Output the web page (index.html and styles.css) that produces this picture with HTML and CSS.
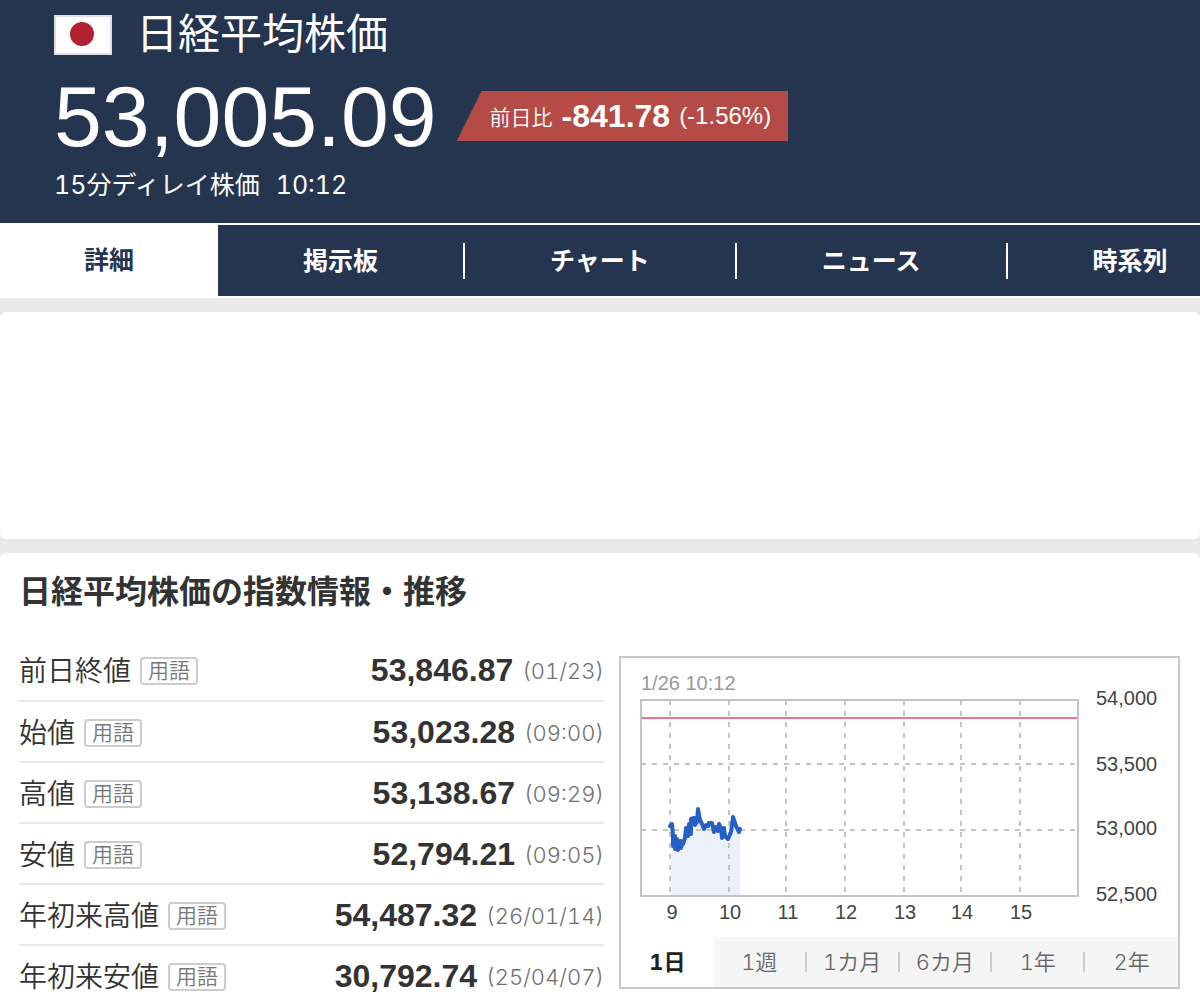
FILE: index.html
```html
<!DOCTYPE html>
<html lang="ja">
<head>
    <meta charset="UTF-8">
    <meta name="viewport" content="width=device-width, initial-scale=1.0">
    <title>日経平均株価</title>
    <link rel="stylesheet" href="styles.css">
</head>
<body>
    <header class="header">
        <div class="title">
            <svg class="flag" viewBox="0 0 58 40" aria-hidden="true">
                <rect x="1" y="1" width="56" height="38" fill="#fff" stroke="#dcdfea" stroke-width="2"/>
                <circle cx="28" cy="19" r="12" fill="#b3202f"/>
            </svg>
            <h1>日経平均株価</h1>
        </div>
        <div class="price">
            <span class="price-value">53,005.09</span>
            <p class="change">
                <span class="change-label">前日比</span>
                <b class="change-value">-841.78</b>
                <span class="change-rate">(-1.56%)</span>
            </p>
        </div>
        <p class="delay"><span>15分ディレイ株価</span><time>10:12</time></p>
    </header>
    <nav class="tabs">
        <a class="tab active" href="#">詳細</a>
        <a class="tab" href="#">掲示板</a>
        <a class="tab" href="#">チャート</a>
        <a class="tab" href="#">ニュース</a>
        <a class="tab" href="#">時系列</a>
    </nav>
    <main>
        <div class="card ad"></div>
        <section class="card info">
            <h2>日経平均株価の指数情報・推移</h2>
            <div class="columns">
                <table class="rows">
                    <tr>
                        <th scope="row">前日終値<a class="term" href="#">用語</a></th>
                        <td><b>53,846.87</b><span class="date">(01/23)</span></td>
                    </tr>
                    <tr>
                        <th scope="row">始値<a class="term" href="#">用語</a></th>
                        <td><b>53,023.28</b><span class="date">(09:00)</span></td>
                    </tr>
                    <tr>
                        <th scope="row">高値<a class="term" href="#">用語</a></th>
                        <td><b>53,138.67</b><span class="date">(09:29)</span></td>
                    </tr>
                    <tr>
                        <th scope="row">安値<a class="term" href="#">用語</a></th>
                        <td><b>52,794.21</b><span class="date">(09:05)</span></td>
                    </tr>
                    <tr>
                        <th scope="row">年初来高値<a class="term" href="#">用語</a></th>
                        <td><b>54,487.32</b><span class="date">(26/01/14)</span></td>
                    </tr>
                    <tr>
                        <th scope="row">年初来安値<a class="term" href="#">用語</a></th>
                        <td><b>30,792.74</b><span class="date">(25/04/07)</span></td>
                    </tr>
                </table>
                <div class="chart">
                    <svg class="plot" viewBox="0 0 557 279">
                        <text class="plot-date" x="20" y="32">1/26 10:12</text>
                        <!-- area under the price line -->
                        <path fill="#ebf0f9" d="M50 238V168L52 190L62 188L66 180L70 164L77 156L82 170L90 167L96 174L106 180L113 166L119 172V238Z"/>
                        <!-- grid -->
                        <path class="grid" d="M49 42V238M108 42V238M165 42V238M224 42V238M283 42V238M340 42V238M399 42V238"/>
                        <path class="grid" d="M20 106H457M20 172H457"/>
                        <rect class="frame" x="20" y="42" width="437" height="196"/>
                        <!-- previous close -->
                        <path d="M21 60H456" stroke="#e8788a" stroke-width="2"/>
                        <path class="line" d="M49 168L51 166L52 178L52 188L54 178L54 191L56 181L57 192L59 183L60 190L62 183L62 186L64 180L65 170L67 178L68 166L70 176L70 161L73 160L74 167L76 164L77 151L79 162L81 166L83 171L85 167L87 168L88 165L91 165L93 174L95 169L97 173L98 166L100 170L101 180L103 170L104 178L107 181L110 174L112 159L115 168L118 174L119 171"/>
                        <g class="labels">
                            <text x="475" y="47">54,000</text>
                            <text x="475" y="113">53,500</text>
                            <text x="475" y="177">53,000</text>
                            <text x="475" y="243">52,500</text>
                        </g>
                        <g class="labels hours">
                            <text x="51" y="261">9</text>
                            <text x="109" y="261">10</text>
                            <text x="167" y="261">11</text>
                            <text x="225" y="261">12</text>
                            <text x="284" y="261">13</text>
                            <text x="341" y="261">14</text>
                            <text x="400" y="261">15</text>
                        </g>
                    </svg>
                    <div class="periods">
                        <button class="active" type="button">1日</button>
                        <button type="button">1週</button>
                        <button type="button">1カ月</button>
                        <button type="button">6カ月</button>
                        <button type="button">1年</button>
                        <button type="button">2年</button>
                    </div>
                </div>
            </div>
        </section>
    </main>
</body>
</html>
```
FILE: styles.css
```css
* {
    box-sizing: border-box;
}
body {
    margin: 0;
    font-family: "Liberation Sans", "Noto Sans CJK JP", sans-serif;
    background: #e9e9e9;
    color: #333;
    overflow-x: hidden;
}
h1, h2, p {
    margin: 0;
}
a {
    color: inherit;
    text-decoration: none;
}
.header {
    padding: 14px 54px 29px;
    background: #25344f;
    color: #fff;
}
.title {
    display: flex;
    align-items: center;
    gap: 24px;
    height: 42px;
}
.flag {
    width: 58px;
    height: 40px;
}
h1 {
    font-size: 42px;
    font-weight: 400;
    line-height: 42px;
}
.price {
    display: flex;
    align-items: center;
    gap: 20px;
    height: 120px;
}
.price-value {
    font-size: 86px;
    line-height: 120px;
}
.change {
    display: flex;
    align-items: center;
    gap: 9px;
    height: 50px;
    padding: 0 17px 0 33px;
    background: #b54b46;
    clip-path: polygon(25px 0, 100% 0, 100% 100%, 0 100%);
    white-space: nowrap;
}
.change-label {
    font-size: 21px;
    font-weight: 350;
}
.change-value {
    font-size: 32px;
}
.change-rate {
    font-size: 24px;
}
.delay {
    display: flex;
    gap: 16px;
    font-family: Inter, "Noto Sans CJK JP", sans-serif;
    font-size: 25px;
    font-weight: 400;
    font-variant-numeric: tabular-nums;
    line-height: 18px;
}
.tabs {
    display: flex;
    height: 75px;
    border-top: 2px solid #fff;
    border-bottom: 2px solid #fff;
    background: #25344f;
    color: #fff;
    overflow: hidden;
}
.tab {
    flex: none;
    align-self: center;
    padding: 0 85px;
    border-right: 2px solid #fff;
    font-size: 25px;
    font-weight: 700;
    line-height: 36px;
}
.tab.active {
    align-self: stretch;
    padding: 0 84px;
    border: 0;
    background: #fff;
    color: #25344f;
    line-height: 71px;
}
main {
    display: flex;
    flex-direction: column;
    gap: 14px;
    padding-top: 14px;
}
.card {
    border-radius: 6px;
    background: #fff;
}
.ad {
    height: 227px;
}
.info {
    padding: 14px 20px 12px 19px;
}
h2 {
    font-size: 32px;
    line-height: 50px;
}
.columns {
    display: grid;
    grid-template-columns: 585fr 561fr;
    gap: 15px;
    padding-top: 23px;
}
.rows {
    border-collapse: collapse;
    align-self: start;
    width: 100%;
}
.rows tr + tr {
    border-top: 2px solid #e8e8e8;
}
.rows th,
.rows td {
    height: 61px;
    padding: 0;
    white-space: nowrap;
}
.rows th {
    padding-bottom: 2px;
    font-size: 28px;
    font-weight: 350;
    text-align: left;
}
.rows td {
    padding-top: 1px;
    text-align: right;
}
.rows b {
    font-size: 32px;
}
.term {
    display: inline-block;
    margin-left: 9px;
    padding: 0 6px;
    border: 2px solid #ccc;
    border-radius: 4px;
    color: #777;
    font-size: 21px;
    line-height: 24px;
    vertical-align: 3px;
}
.date {
    margin-left: 9px;
    font-family: Inter, sans-serif;
    font-size: 22px;
    font-weight: 350;
    font-variant-numeric: tabular-nums;
    line-height: 30px;
    color: #707070;
    vertical-align: 2px;
}
.chart {
    align-self: start;
    margin-top: 16px;
    border: 2px solid #c8c8c8;
}
.plot {
    display: block;
    width: 100%;
    font-size: 20px;
    fill: none;
}
.plot-date {
    fill: #999;
}
.grid {
    stroke: #c4c4c4;
    stroke-width: 2;
    stroke-dasharray: 5 6;
}
.frame {
    stroke: #c4c4c4;
    stroke-width: 2;
}
.line {
    stroke: #2660c4;
    stroke-width: 4;
    stroke-linejoin: round;
    stroke-linecap: round;
}
.labels {
    fill: #444;
}
.hours {
    text-anchor: middle;
}
.periods {
    display: grid;
    grid-template-columns: repeat(6, 1fr);
    align-items: center;
    background: #f5f5f5;
}
.periods button {
    padding: 0;
    border: 0;
    border-right: 2px solid #ccc;
    background: none;
    color: #666;
    font-family: Inter, "Noto Sans CJK JP", sans-serif;
    font-size: 22px;
    font-weight: 350;
    font-variant-numeric: tabular-nums;
    line-height: 20px;
}
.periods button:last-child {
    border: 0;
}
.periods .active {
    border: 0;
    background: #fff;
    color: #222;
    font-weight: 700;
    line-height: 50px;
}
```
